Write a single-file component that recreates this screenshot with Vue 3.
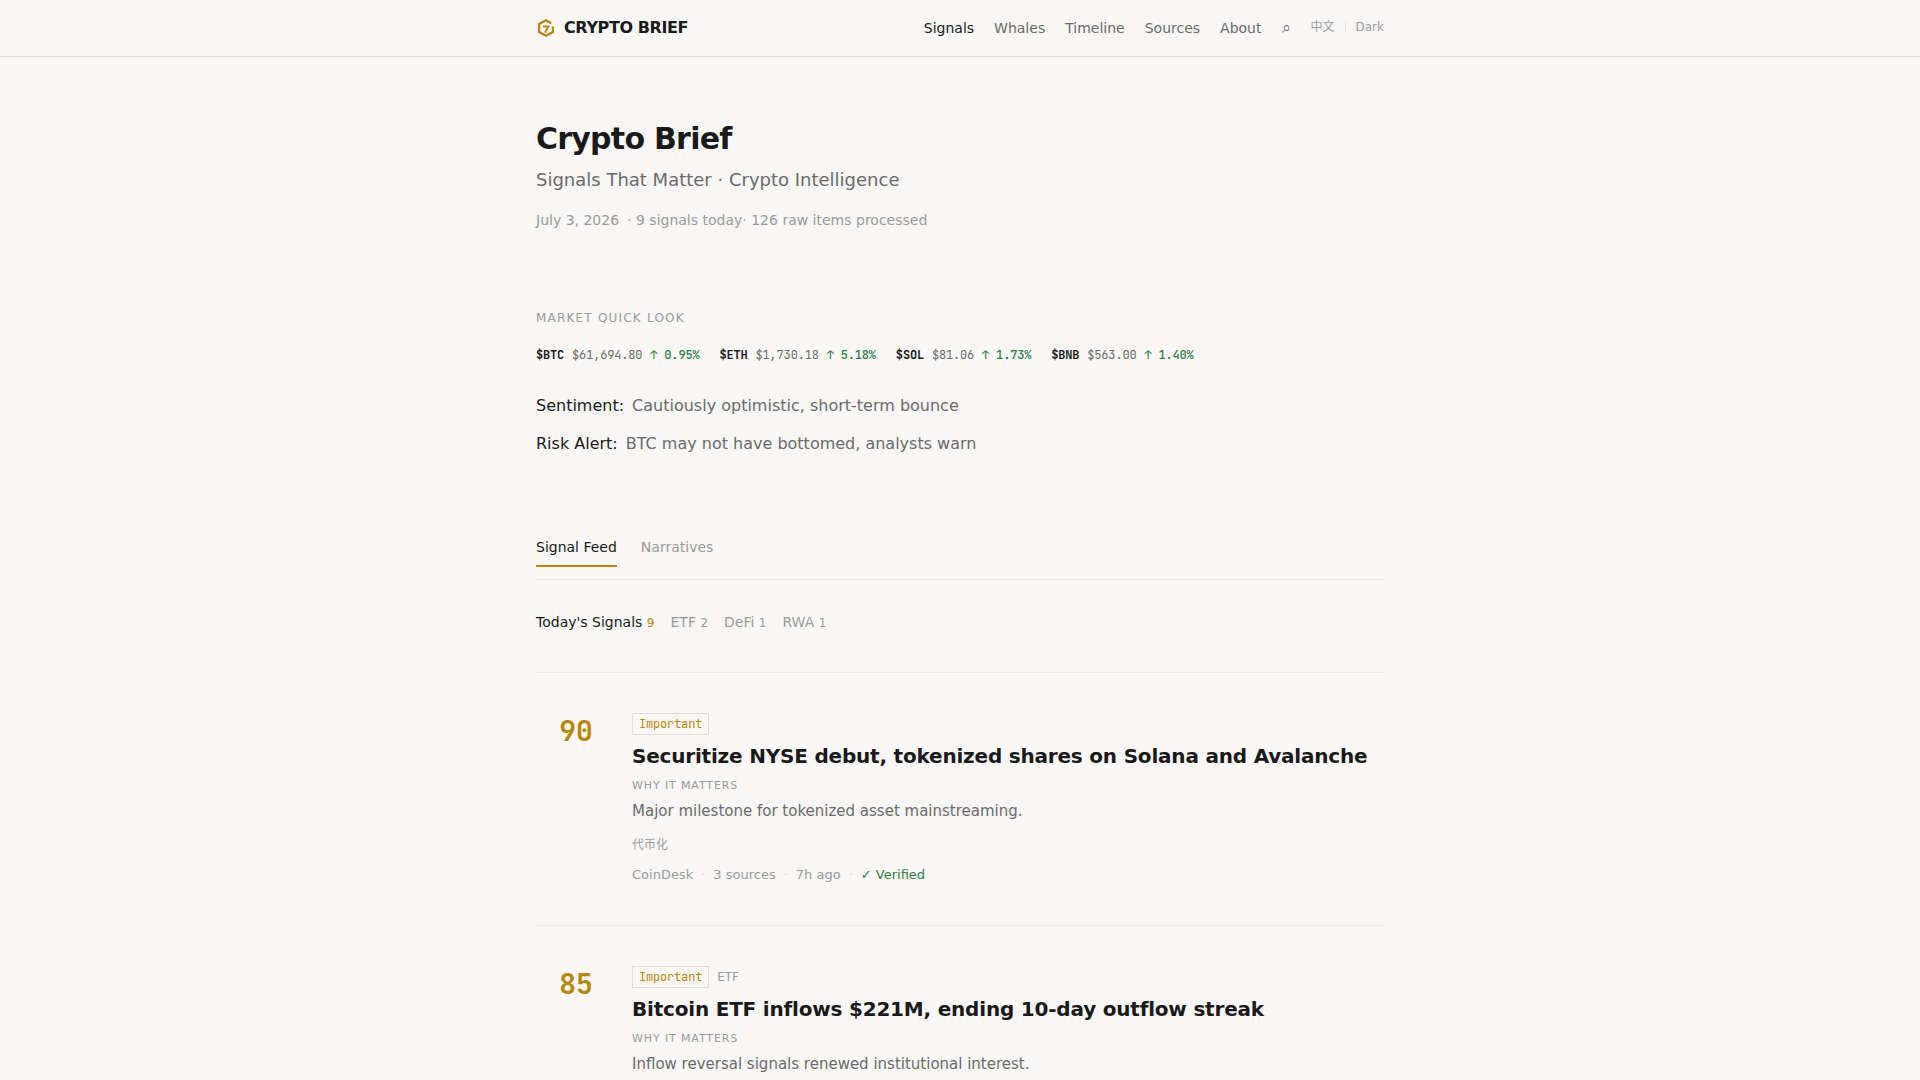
<script setup>
import { ref } from 'vue'

const navLinks = ['Signals', 'Whales', 'Timeline', 'Sources', 'About']

const tickers = [
  { symbol: '$BTC', price: '$61,694.80', change: '0.95%' },
  { symbol: '$ETH', price: '$1,730.18', change: '5.18%' },
  { symbol: '$SOL', price: '$81.06', change: '1.73%' },
  { symbol: '$BNB', price: '$563.00', change: '1.40%' },
]

const outlook = [
  { label: 'Sentiment:', text: 'Cautiously optimistic, short-term bounce' },
  { label: 'Risk Alert:', text: 'BTC may not have bottomed, analysts warn' },
]

const tabs = ['Signal Feed', 'Narratives']
const activeTab = ref('Signal Feed')

const filters = [
  { name: "Today's Signals", count: 9 },
  { name: 'ETF', count: 2 },
  { name: 'DeFi', count: 1 },
  { name: 'RWA', count: 1 },
]
const activeFilter = ref("Today's Signals")

const signals = [
  {
    score: 90,
    level: 'Important',
    category: '',
    title: 'Securitize NYSE debut, tokenized shares on Solana and Avalanche',
    why: 'Major milestone for tokenized asset mainstreaming.',
    tag: '代币化',
    meta: ['CoinDesk', '3 sources', '7h ago'],
  },
  {
    score: 85,
    level: 'Important',
    category: 'ETF',
    title: 'Bitcoin ETF inflows $221M, ending 10-day outflow streak',
    why: 'Inflow reversal signals renewed institutional interest.',
    tag: '',
    meta: [],
  },
]
</script>

<template>
  <div class="page">
    <header class="site-header">
      <div class="container header-row">
        <a class="brand" href="#">
          <svg class="brand-mark" viewBox="0 0 20 20" fill="none" stroke="currentColor" stroke-width="2.2" aria-hidden="true">
            <path d="M15.2 5.2 10 2.2 3.1 6v8l6.9 3.8 6.9-3.8V8.6" />
            <path d="M6.8 8.6h5.4L9 14.6" stroke-width="2" />
          </svg>
          <span>CRYPTO BRIEF</span>
        </a>
        <nav class="nav">
          <a v-for="(link, i) in navLinks" :key="link" href="#" :class="{ current: i === 0 }">{{ link }}</a>
          <a class="search" href="#" aria-label="Search">⌕</a>
          <div class="prefs">
            <button type="button">中文</button>
            <span class="divider"></span>
            <button type="button">Dark</button>
          </div>
        </nav>
      </div>
    </header>

    <main class="container">
      <section class="hero">
        <h1>Crypto Brief</h1>
        <p class="subtitle">Signals That Matter · Crypto Intelligence</p>
        <p class="summary"><span class="date">July 3, 2026</span><span>· 9 signals today</span><span>· 126 raw items processed</span></p>
      </section>

      <section class="market">
        <h2 class="label">MARKET QUICK LOOK</h2>
        <ul class="tickers">
          <li v-for="t in tickers" :key="t.symbol">
            <strong>{{ t.symbol }}</strong>
            <span class="price">{{ t.price }}</span>
            <span class="change">↑ {{ t.change }}</span>
          </li>
        </ul>
        <div class="outlook">
          <p v-for="o in outlook" :key="o.label"><span class="name">{{ o.label }}</span><span>{{ o.text }}</span></p>
        </div>
      </section>

      <section>
        <div class="tabs">
          <button v-for="tab in tabs" :key="tab" type="button" :class="{ active: tab === activeTab }" @click="activeTab = tab">{{ tab }}</button>
        </div>
        <div class="filters">
          <button v-for="f in filters" :key="f.name" type="button" :class="{ active: f.name === activeFilter }" @click="activeFilter = f.name">
            {{ f.name }} <span class="count">{{ f.count }}</span>
          </button>
        </div>

        <article v-for="s in signals" :key="s.title" class="signal">
          <div class="score">{{ s.score }}</div>
          <div class="body">
            <div class="badges">
              <span class="badge">{{ s.level }}</span>
              <span v-if="s.category" class="category">{{ s.category }}</span>
            </div>
            <h3>{{ s.title }}</h3>
            <div class="why-label">WHY IT MATTERS</div>
            <p class="why">{{ s.why }}</p>
            <div v-if="s.tag" class="tag">{{ s.tag }}</div>
            <div v-if="s.meta.length" class="meta">
              <template v-for="m in s.meta" :key="m">
                <span>{{ m }}</span><span class="dot">·</span>
              </template>
              <span class="verified">✓ Verified</span>
            </div>
          </div>
        </article>
      </section>
    </main>
  </div>
</template>

<style>
body {
  margin: 0;
  background: #f9f8f6;
}
html {
  overflow-x: hidden;
  scrollbar-width: none;
}
</style>

<style scoped>
.page {
  --ink: #1a1a1a;
  --soft: #6b6b6b;
  --faint: #9b9b9b;
  --gold: #b8860b;
  --green: #2d7d46;
  --mono: "JetBrains Mono", "Liberation Mono", monospace;
  color: var(--ink);
  background: #f9f8f6;
  font-family: "DejaVu Sans", "Noto Sans CJK SC", sans-serif;
}
h1, h2, h3, p, ul {
  margin: 0;
  padding: 0;
}
a {
  color: inherit;
  text-decoration: none;
}
button {
  margin: 0;
  padding: 0;
  border: 0;
  background: none;
  color: inherit;
  font: inherit;
  cursor: pointer;
}
.container {
  box-sizing: border-box;
  max-width: 880px;
  margin: 0 auto;
  padding: 0 16px;
}
.site-header {
  border-bottom: 1px solid #dddddb;
}
.header-row {
  display: flex;
  align-items: center;
  justify-content: space-between;
  min-height: 56px;
}
.brand {
  display: flex;
  align-items: center;
  gap: 8px;
  font-size: 16px;
  font-weight: 700;
  line-height: 24px;
  letter-spacing: -0.025em;
}
.brand-mark {
  width: 20px;
  height: 20px;
  color: var(--gold);
}
.nav {
  display: flex;
  align-items: center;
  gap: 20px;
  font-size: 14px;
  line-height: 20px;
  color: var(--soft);
}
.nav .current {
  color: var(--ink);
}
.nav .search {
  font-size: 16px;
}
.prefs {
  display: flex;
  align-items: center;
  gap: 10px;
  margin-bottom: 2px;
  font-size: 12px;
  line-height: 18px;
  color: var(--faint);
}
.divider {
  width: 1px;
  height: 12px;
  background: #e5e5e2;
}
.hero {
  padding: 64px 0 78px;
}
h1 {
  font-size: 30px;
  line-height: 36px;
  letter-spacing: -0.025em;
}
.subtitle {
  margin-top: 8px;
  font-size: 18px;
  line-height: 30px;
  color: var(--soft);
}
.summary {
  margin-top: 14px;
  font-size: 14px;
  line-height: 22px;
  color: var(--faint);
}
.date {
  margin-right: 8px;
}
.label {
  font-size: 12px;
  font-weight: 400;
  line-height: 18px;
  letter-spacing: 0.1em;
  color: var(--faint);
}
.tickers {
  display: flex;
  flex-wrap: wrap;
  gap: 20px;
  margin-top: 18px;
  list-style: none;
  font-family: var(--mono);
  font-size: 12px;
  line-height: 20px;
  letter-spacing: -0.015em;
}
.tickers li {
  display: flex;
  gap: 8px;
}
.price {
  color: var(--soft);
}
.change {
  font-weight: 500;
  color: var(--green);
}
.outlook {
  display: grid;
  gap: 12px;
  margin-top: 28px;
  font-size: 16px;
  line-height: 26px;
  color: var(--soft);
}
.outlook .name {
  margin-right: 8px;
  color: var(--ink);
}
.tabs {
  display: flex;
  gap: 24px;
  margin-top: 80px;
  padding-bottom: 12px;
  border-bottom: 1px solid #ebebe8;
  font-size: 14px;
  line-height: 20px;
  color: var(--faint);
}
.tabs button {
  padding-bottom: 8px;
  border-bottom: 2px solid transparent;
}
.tabs .active {
  border-color: var(--gold);
  color: var(--ink);
}
.filters {
  display: flex;
  flex-wrap: wrap;
  gap: 16px;
  padding: 32px 0 39px;
  font-size: 14px;
  line-height: 20px;
  color: var(--faint);
}
.filters .active {
  color: var(--ink);
}
.count {
  font-size: 12px;
}
.active .count {
  color: var(--gold);
}
.signal {
  display: flex;
  gap: 16px;
  padding: 40px 0;
  border-top: 1px solid #ebebe8;
}
.score {
  flex: none;
  width: 80px;
  font-family: var(--mono);
  font-size: 28px;
  font-weight: 700;
  line-height: 36px;
  text-align: center;
  color: var(--gold);
}
.badges {
  display: flex;
  align-items: center;
  gap: 8px;
  font-size: 12px;
  line-height: 20px;
}
.badge {
  padding: 0 6px;
  border: 1px solid #dddddb;
  font-family: var(--mono);
  letter-spacing: -0.015em;
  color: var(--gold);
}
.category {
  color: var(--faint);
}
h3 {
  margin-top: 8px;
  font-size: 20px;
  line-height: 26px;
  letter-spacing: -0.01em;
}
.why-label {
  margin-top: 8px;
  font-size: 11px;
  line-height: 18px;
  letter-spacing: 0.08em;
  color: var(--faint);
}
.why {
  margin-top: 4px;
  font-size: 15px;
  line-height: 24px;
  color: var(--soft);
}
.tag {
  margin-top: 12px;
  font-size: 12px;
  line-height: 20px;
  color: var(--faint);
}
.meta {
  display: flex;
  gap: 8px;
  margin-top: 10px;
  font-size: 13px;
  line-height: 20px;
  color: var(--faint);
}
.dot {
  color: #dddddb;
}
.verified {
  color: var(--green);
}
</style>
